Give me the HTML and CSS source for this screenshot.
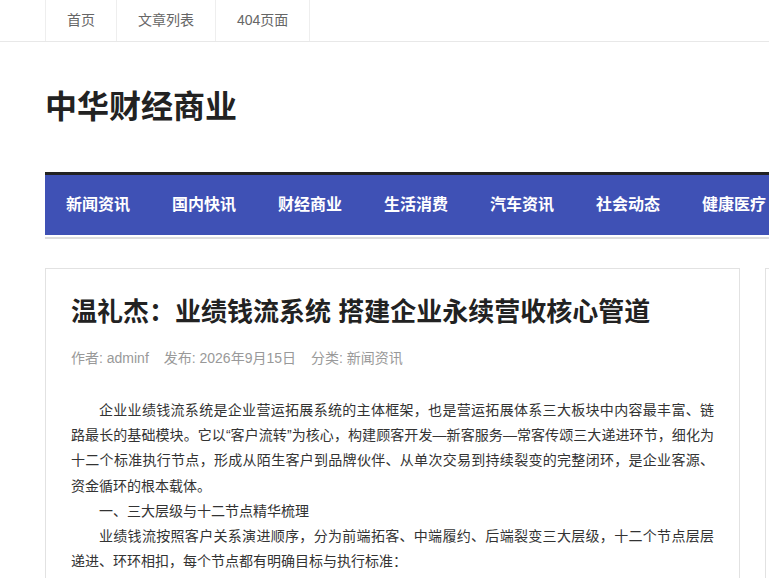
FILE: index.html
```html
<html>
    <head>
        <meta charset="utf-8">
        <link rel="stylesheet" href="styles.css">
        <title>温礼杰：业绩钱流系统 搭建企业永续营收核心管道 - 中华财经商业</title>
    </head>

    <body>
        <div class="topbar">
            <ul class="wrap toplinks">
                <li><a href="#">首页</a></li>
                <li><a href="#">文章列表</a></li>
                <li><a href="#">404页面</a></li>
            </ul>
        </div>

        <div class="wrap">
            <div class="logo">中华财经商业</div>

            <div class="menu">
                <ul>
                    <li><a href="#">新闻资讯</a></li>
                    <li><a href="#">国内快讯</a></li>
                    <li><a href="#">财经商业</a></li>
                    <li><a href="#">生活消费</a></li>
                    <li><a href="#">汽车资讯</a></li>
                    <li><a href="#">社会动态</a></li>
                    <li><a href="#">健康医疗</a></li>
                </ul>
            </div>

            <div class="main">
                <div class="article">
                    <h1 class="article-title">温礼杰：业绩钱流系统 搭建企业永续营收核心管道</h1>
                    <div class="meta">
                        <span>作者: adminf</span>
                        <span>发布: 2026年9月15日</span>
                        <span>分类: <a href="#">新闻资讯</a></span>
                    </div>
                    <div class="content">
                        <p>企业业绩钱流系统是企业营运拓展系统的主体框架，也是营运拓展体系三大板块中内容最丰富、链路最长的基础模块。它以“客户流转”为核心，构建顾客开发—新客服务—常客传颂三大递进环节，细化为十二个标准执行节点，形成从陌生客户到品牌伙伴、从单次交易到持续裂变的完整闭环，是企业客源、资金循环的根本载体。</p>
                        <p>一、三大层级与十二节点精华梳理</p>
                        <p>业绩钱流按照客户关系演进顺序，分为前端拓客、中端履约、后端裂变三大层级，十二个节点层层递进、环环相扣，每个节点都有明确目标与执行标准：</p>
                    </div>
                </div>
                <div class="sidebar">
                    <div class="box"></div>
                </div>
            </div>
        </div>
    </body>
</html>
```

FILE: styles.css
```css
html{
    overflow-x: hidden;
}

body{
    margin: 0;
    font-family: "Liberation Sans", "Noto Sans CJK SC", sans-serif;
    font-size: 14px;
    color: #333;
    background-color: #fff;
}

a{
    color: inherit;
    text-decoration: none;
}

ul{
    list-style: none;
    margin: 0;
    padding: 0;
}

.wrap{
    width: 1060px;
    margin: 0 45px;
}

/* top links */
.topbar{
    border-bottom: 1px solid #e8e8e8;
}

.toplinks{
    display: flex;
}

.toplinks li{
    border-left: 1px solid #eee;
}

.toplinks li:last-child{
    border-right: 1px solid #eee;
}

.toplinks a{
    display: block;
    padding: 0 21px;
    line-height: 41px;
    color: #666;
}

/* site name */
.logo{
    padding: 45px 0 45px;
    font-size: 32px;
    line-height: 40px;
    font-weight: bold;
    color: #222;
}

/* main menu */
.menu{
    border-top: 3px solid #222;
    border-bottom: 2px solid #ddd;
}

.menu ul{
    display: flex;
    height: 60px;
    margin-bottom: 2px;
    background-color: #3f51b5;
}

.menu a{
    display: block;
    padding: 0 21px;
    line-height: 60px;
    font-size: 16px;
    font-weight: bold;
    color: #fff;
    white-space: nowrap;
}

/* article + sidebar */
.main{
    display: flex;
    gap: 25px;
    margin-top: 29px;
    align-items: flex-start;
}

.article{
    width: 695px;
    min-height: 600px;
    box-sizing: border-box;
    padding: 25px 25px 30px;
    border: 1px solid #e2e2e2;
}

.article-title{
    margin: 0;
    font-size: 26px;
    line-height: 36px;
    font-weight: bold;
    color: #222;
}

.meta{
    margin: 18px 0 30px;
    line-height: 20px;
    color: #999;
}

.meta span{
    margin-right: 11px;
}

.content p{
    margin: 0;
    line-height: 25.2px;
    text-indent: 2em;
    text-align: justify;
}

.sidebar{
    width: 320px;
}

.box{
    height: 600px;
    border: 1px solid #e2e2e2;
}
```
